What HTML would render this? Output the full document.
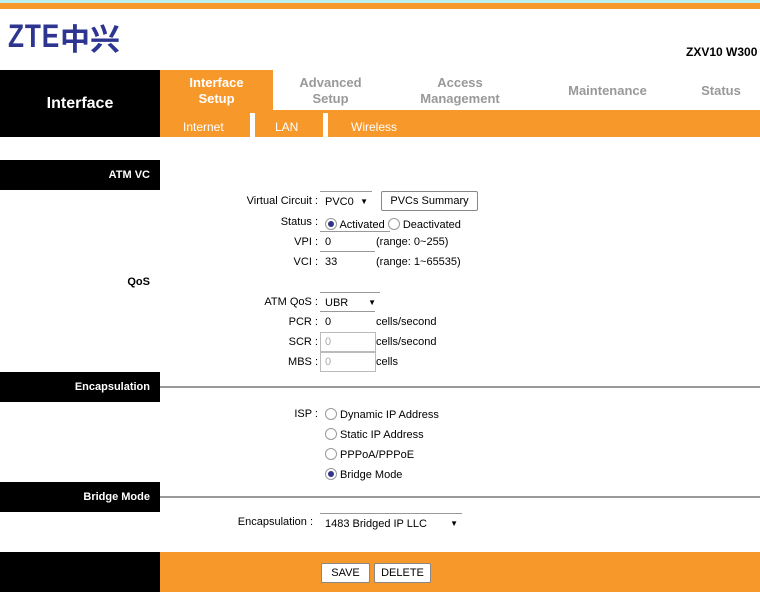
<!DOCTYPE html>
<html><head><meta charset="utf-8"><style>
*{margin:0;padding:0;box-sizing:border-box}
body{width:760px;height:592px;position:relative;background:#fff;font-family:"Liberation Sans",Arial,sans-serif;font-size:11px;color:#000;overflow:hidden}
.a{position:absolute}
.blk{background:#000;color:#fff;font-weight:bold;text-align:right}
.or{background:#f7982b}
.nav{color:#999;font-weight:bold;font-size:13px;text-align:center;line-height:16px}
.lbl{text-align:right;width:90px}
.inp{border-top:1px solid #999;height:20px;line-height:20px;padding-left:5px}
.rad{width:12px;height:12px;border:1px solid #999;border-radius:50%;background:#fff;display:inline-block;vertical-align:-2px}
.rad.on::after{content:"";display:block;width:6px;height:6px;border-radius:50%;background:#33338a;margin:2px}
.btn{border:1px solid #888;border-radius:2px;background:#fff;text-align:center;font-size:11px}
</style></head><body>
<div class="a" style="left:0;top:0;width:760px;height:3px;background:#bdeef0"></div>
<div class="a or" style="left:0;top:3px;width:760px;height:6px"></div>
<div class="a" style="left:8px;top:18px;font-size:32px;line-height:36px;font-weight:bold;color:#2d3591;letter-spacing:1px;transform:scaleX(0.82);transform-origin:left">ZTE</div>
<div class="a" style="left:60px;top:19px;font-size:30px;line-height:36px;font-weight:bold;color:#2d3591;font-family:'Noto Sans CJK SC',sans-serif">中兴</div>
<div class="a" style="left:686px;top:45px;font-weight:bold;font-size:12px">ZXV10 W300</div>
<div class="a blk" style="left:0;top:70px;width:160px;height:67px;text-align:center;line-height:67px;font-size:16px">Interface</div>
<div class="a or" style="left:160px;top:70px;width:113px;height:40px"></div>
<div class="a nav" style="left:160px;top:75px;width:113px;color:#fff">Interface<br>Setup</div>
<div class="a nav" style="left:273px;top:75px;width:115px">Advanced<br>Setup</div>
<div class="a nav" style="left:400px;top:75px;width:120px">Access<br>Management</div>
<div class="a nav" style="left:545px;top:83px;width:125px">Maintenance</div>
<div class="a nav" style="left:690px;top:83px;width:62px">Status</div>
<div class="a or" style="left:160px;top:110px;width:600px;height:27px;color:#fff;font-size:12px;line-height:34px">
<span class="a" style="left:23px">Internet</span>
<span class="a" style="left:90px;top:3px;width:5px;height:24px;background:#fff"></span>
<span class="a" style="left:115px">LAN</span>
<span class="a" style="left:163px;top:3px;width:5px;height:24px;background:#fff"></span>
<span class="a" style="left:191px">Wireless</span>
</div>
<div class="a blk" style="left:0;top:160px;width:160px;height:30px;line-height:30px;padding-right:10px">ATM VC</div>
<div class="a" style="left:0;top:276px;width:150px;text-align:right;font-weight:bold">QoS</div>

<div class="a lbl" style="left:228px;top:195px">Virtual Circuit :</div>
<div class="a inp" style="left:320px;top:191px;width:52px">PVC0 <span style="position:absolute;right:4px;font-size:8px">▼</span></div>
<div class="a btn" style="left:381px;top:191px;width:97px;height:20px;line-height:18px">PVCs Summary</div>
<div class="a lbl" style="left:228px;top:216px">Status :</div>
<div class="a" style="left:325px;top:218px"><span class="rad on"></span> Activated <span class="rad"></span> Deactivated</div>
<div class="a" style="left:320px;top:231px;width:70px;border-top:1px solid #999"></div>
<div class="a lbl" style="left:228px;top:236px">VPI :</div>
<div class="a" style="left:325px;top:236px">0</div><div class="a" style="left:376px;top:236px">(range: 0~255)</div>
<div class="a" style="left:320px;top:251px;width:55px;border-top:1px solid #999"></div>
<div class="a lbl" style="left:228px;top:256px">VCI :</div>
<div class="a" style="left:325px;top:256px">33</div><div class="a" style="left:376px;top:256px">(range: 1~65535)</div>

<div class="a lbl" style="left:228px;top:296px">ATM QoS :</div>
<div class="a inp" style="left:320px;top:292px;width:60px">UBR <span style="position:absolute;right:4px;font-size:8px">▼</span></div>
<div class="a" style="left:320px;top:311px;width:55px;border-top:1px solid #999"></div>
<div class="a lbl" style="left:228px;top:316px">PCR :</div>
<div class="a" style="left:325px;top:316px">0</div><div class="a" style="left:376px;top:316px">cells/second</div>
<div class="a lbl" style="left:228px;top:336px">SCR :</div>
<div class="a" style="left:320px;top:332px;width:56px;height:20px;border:1px solid #bbb;color:#aaa;padding:3px 4px">0</div><div class="a" style="left:376px;top:336px">cells/second</div>
<div class="a lbl" style="left:228px;top:356px">MBS :</div>
<div class="a" style="left:320px;top:352px;width:56px;height:20px;border:1px solid #bbb;color:#aaa;padding:3px 4px">0</div><div class="a" style="left:376px;top:356px">cells</div>

<div class="a blk" style="left:0;top:372px;width:160px;height:30px;line-height:30px;padding-right:10px">Encapsulation</div>
<div class="a" style="left:160px;top:386px;width:600px;height:2px;background:#999"></div>
<div class="a lbl" style="left:228px;top:408px">ISP :</div>
<div class="a" style="left:325px;top:408px"><span class="rad"></span> Dynamic IP Address</div>
<div class="a" style="left:325px;top:428px"><span class="rad"></span> Static IP Address</div>
<div class="a" style="left:325px;top:448px"><span class="rad"></span> PPPoA/PPPoE</div>
<div class="a" style="left:325px;top:468px"><span class="rad on"></span> Bridge Mode</div>

<div class="a blk" style="left:0;top:482px;width:160px;height:30px;line-height:30px;padding-right:10px">Bridge Mode</div>
<div class="a" style="left:160px;top:496px;width:600px;height:2px;background:#999"></div>
<div class="a" style="left:200px;top:516px;width:113px;text-align:right">Encapsulation :</div>
<div class="a inp" style="left:320px;top:513px;width:142px">1483 Bridged IP LLC <span style="position:absolute;right:4px;font-size:8px">▼</span></div>

<div class="a" style="left:0;top:552px;width:160px;height:40px;background:#000"></div>
<div class="a or" style="left:160px;top:552px;width:600px;height:40px"></div>
<div class="a btn" style="left:321px;top:563px;width:49px;height:20px;line-height:18px">SAVE</div>
<div class="a btn" style="left:374px;top:563px;width:57px;height:20px;line-height:18px">DELETE</div>
</body></html>
